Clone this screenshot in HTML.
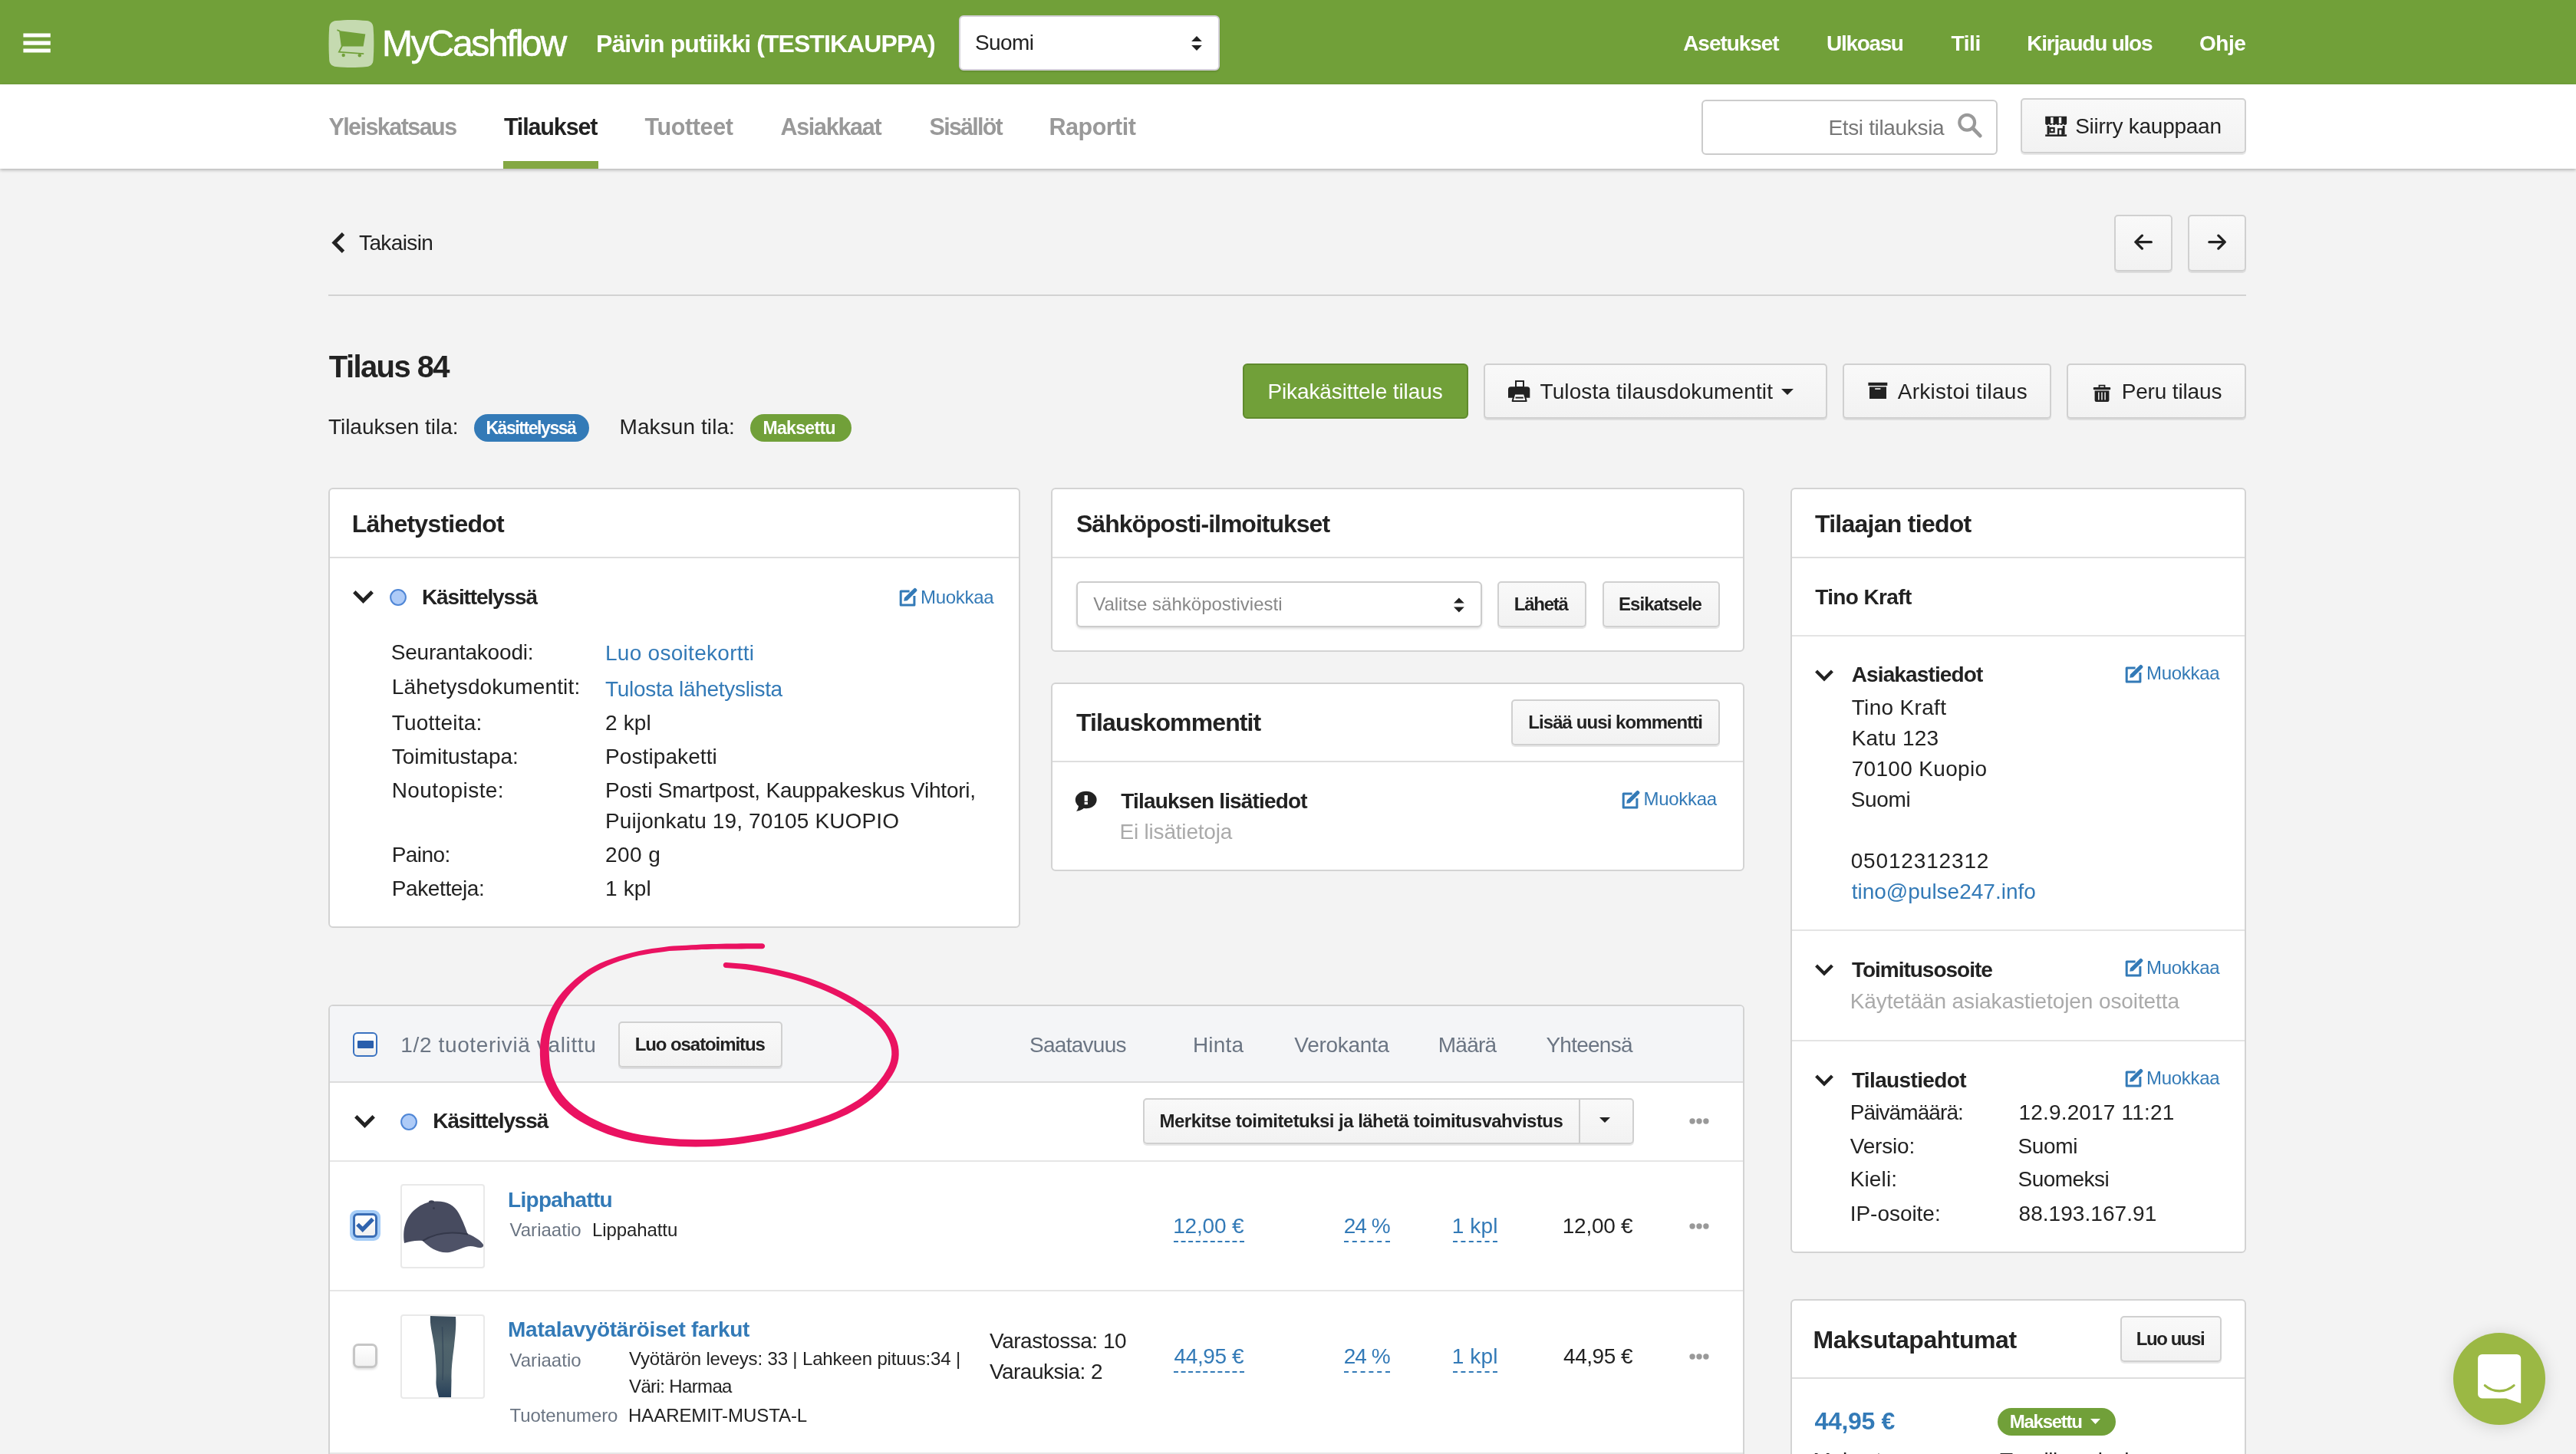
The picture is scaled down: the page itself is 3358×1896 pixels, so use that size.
<!DOCTYPE html>
<html lang="fi"><head><meta charset="utf-8"><title>Tilaus 84 - MyCashflow</title>
<style>
html{font-size:100px}@media (min-resolution:1.5dppx),(-webkit-min-device-pixel-ratio:1.5){html{font-size:calc(100vw/33.5799)}}html,body{margin:0;padding:0}
html{overflow:hidden;width:33.58rem;height:18.96rem}
body{width:33.58rem;height:18.96rem;overflow:hidden;background:#f3f3f3;font-family:"Liberation Sans",sans-serif;color:#222;position:relative}
.t{position:absolute;white-space:pre;line-height:1;font-size:0.28rem}
.b{position:absolute;box-sizing:border-box}
.card{position:absolute;box-sizing:border-box;background:#fff;border:0.02rem solid #d3d3d3;border-radius:0.06rem}
.btn{position:absolute;box-sizing:border-box;border:0.02rem solid #d0d0d0;border-radius:0.05rem;background:linear-gradient(#f9f9f9,#f2f2f2);box-shadow:0 0.02rem 0 rgba(0,0,0,.09)}
.hr{position:absolute;height:0.02rem;background:#dedede}
svg{position:absolute;overflow:visible}
</style></head><body>
<div id="pg" style="position:absolute;left:0;top:0;width:33.58rem;height:18.96rem;overflow:hidden">
<div class="b" style="left:0rem;top:0rem;width:33.58rem;height:1.1rem;background:#71a039"></div>
<svg style="left:0.28rem;top:0.4rem;width:0.42rem;height:0.32rem" viewBox="28 40 42 32"><path d="M30.400 43.400h35.400v5.100h-35.400zM30.400 53.600h35.400v5.100h-35.400zM30.400 63.500h35.400v5.100h-35.400z" fill="#fff"/></svg>
<svg style="left:4.26rem;top:0.24rem;width:0.64rem;height:0.66rem" viewBox="426 24 64 66"><path d="M438 27 C452 25.500 464 25.500 478 27 C483.500 27.600 486.200 31 486.600 36 C487.600 49 487.600 64 486.600 78 C486.200 83.500 483.500 86.400 478 87 C464 88.300 452 88.300 438 87 C432.500 86.400 429.600 83.500 429.200 78 C428.300 64 428.300 49 429.200 36 C429.600 31 432.500 27.600 438 27Z" fill="#c5dab0"/><path d="M439.600 38.300L443.400 39.700 443.400 40.300 476.300 44.600 473.600 60.600 446.800 60.600 443.300 67 474.200 69.300 474.200 71 440.500 68.600 444.800 60.200 442.200 41.300 439.200 40.100Z" fill="#71a039"/><circle cx="447.700" cy="72" r="2.200" fill="#71a039"/><circle cx="468.800" cy="72.300" r="2.200" fill="#71a039"/></svg>
<div class="b" style="left:12.5rem;top:0.2rem;width:3.4rem;height:0.72rem;background:#fff;border:0.02rem solid #d4d0d8;border-radius:0.06rem;box-shadow:0 0.02rem 0.02rem rgba(0,0,0,.10)"></div>
<svg style="left:15.5rem;top:0.44rem;width:0.2rem;height:0.25rem" viewBox="1550 44 20 25"><path d="M1553.100 54L1560 47 1566.800 54zM1553.100 59L1560 66 1566.800 59z" fill="#222"/></svg>
<div class="b" style="left:0rem;top:1.1rem;width:33.58rem;height:1.1rem;background:#fff;box-shadow:0 0.02rem 0.04rem rgba(0,0,0,.25)"></div>
<div class="b" style="left:6.56rem;top:2.1rem;width:1.237rem;height:0.1rem;background:#84a843"></div>
<div class="b" style="left:22.18rem;top:1.3rem;width:3.86rem;height:0.72rem;background:#fff;border:0.02rem solid #ccc;border-radius:0.06rem"></div>
<svg style="left:25.48rem;top:1.44rem;width:0.4rem;height:0.4rem" viewBox="2548 144 40 40"><circle cx="2564.200" cy="159.800" r="9.900" fill="none" stroke="#999" stroke-width="4.200"/><path d="M2571.500 167L2581.300 177.100" stroke="#999" stroke-width="4.800" stroke-linecap="round"/></svg>
<div class="btn" style="left:26.34rem;top:1.28rem;width:2.94rem;height:0.72rem"></div>
<svg style="left:26.64rem;top:1.5rem;width:0.32rem;height:0.3rem" viewBox="2664 150 32 30"><path d="M2666.200 151.700H2694.100V161.500Q2691.800 164.600 2689.450 161.500 2687.100 164.600 2684.800 161.500 2682.450 164.600 2680.150 161.500 2677.800 164.600 2675.500 161.500 2673.150 164.600 2670.850 161.500 2668.500 164.600 2666.200 161.500Z" fill="#222"/><path d="M2674.900 153v8M2685.500 153v8" stroke="#f6f6f6" stroke-width="3.400"/><path d="M2670 164v11.500M2690.200 164v11.500" stroke="#222" stroke-width="2.800"/><rect x="2666.200" y="175.400" width="27.900" height="2.500" fill="#222"/><rect x="2672.400" y="167" width="5.200" height="5.200" fill="none" stroke="#222" stroke-width="2.200"/><path d="M2683.200 176v-7.600h5.200v7.600" fill="none" stroke="#222" stroke-width="2.200"/></svg>
<svg style="left:4.32rem;top:3.03rem;width:0.19rem;height:0.27rem" viewBox="0 0 19 27"><path d="M15.500 1.8L3.800 13.500 15.500 25.200" fill="none" stroke="#222" stroke-width="4.800" stroke-linejoin="miter"/></svg>
<div class="btn" style="left:27.56rem;top:2.8rem;width:0.76rem;height:0.74rem"></div>
<div class="btn" style="left:28.52rem;top:2.8rem;width:0.76rem;height:0.74rem"></div>
<svg style="left:27.78rem;top:3.02rem;width:0.32rem;height:0.28rem" viewBox="2778 302 32 28"><path d="M2804.300 315.650H2784.200M2792.400 307.200L2783.900 315.650 2792.400 324.100" fill="none" stroke="#222" stroke-width="3.300" stroke-linecap="round" stroke-linejoin="round"/></svg>
<svg style="left:28.74rem;top:3.02rem;width:0.32rem;height:0.28rem" viewBox="2874 302 32 28"><path d="M2879.900 315.650H2900M2891.800 307.200L2900.300 315.650 2891.800 324.100" fill="none" stroke="#222" stroke-width="3.300" stroke-linecap="round" stroke-linejoin="round"/></svg>
<div class="hr" style="left:4.28rem;top:3.84rem;width:25rem;background:#d2d2d2"></div>
<div class="b" style="left:6.18rem;top:5.4rem;width:1.5rem;height:0.36rem;background:#337ab7;border-radius:0.18rem"></div>
<div class="b" style="left:9.78rem;top:5.4rem;width:1.32rem;height:0.36rem;background:#71a039;border-radius:0.18rem"></div>
<div class="b" style="left:16.2rem;top:4.74rem;width:2.94rem;height:0.72rem;background:#71a039;border:0.02rem solid #5f8a2d;border-radius:0.06rem"></div>
<div class="btn" style="left:19.34rem;top:4.74rem;width:4.48rem;height:0.72rem"></div>
<svg style="left:19.64rem;top:4.94rem;width:0.32rem;height:0.32rem" viewBox="1964 494 32 32"><rect x="1976" y="497" width="10" height="8" fill="#fafafa" stroke="#222" stroke-width="2"/><path d="M1969.500 504.200h21.300a3.500 3.500 0 0 1 3.500 3.500v11h-28.300v-11a3.500 3.500 0 0 1 3.500-3.500z" fill="#222"/><path d="M1974.300 513.600h12.700l2.700 9.400h-18.100z" fill="#fafafa" stroke="#222" stroke-width="2" stroke-linejoin="round"/><path d="M1975.500 518.600h10.300" stroke="#222" stroke-width="2"/></svg>
<svg style="left:23.22rem;top:5.07rem;width:0.16rem;height:0.08rem" viewBox="0 0 16 8"><path d="M0 0h16L8 8z" fill="#222"/></svg>
<div class="btn" style="left:24.02rem;top:4.74rem;width:2.72rem;height:0.72rem"></div>
<svg style="left:24.34rem;top:4.97rem;width:0.28rem;height:0.25rem" viewBox="2434 497 28 25"><rect x="2435.400" y="498.800" width="24.900" height="4.100" fill="#222"/><rect x="2437" y="504.400" width="22" height="15.600" fill="#222"/><rect x="2444.200" y="506.200" width="7.200" height="1.700" fill="#f0f0f0"/></svg>
<div class="btn" style="left:26.94rem;top:4.74rem;width:2.34rem;height:0.72rem"></div>
<svg style="left:27.27rem;top:5rem;width:0.26rem;height:0.26rem" viewBox="2727 500 26 26"><path d="M2736.500 505v-2.300h7v2.300" fill="none" stroke="#222" stroke-width="1.800"/><rect x="2728.800" y="505" width="22.400" height="3.300" rx="1" fill="#222"/><path d="M2730.600 509.500h18.800v12.400a2 2 0 0 1-2 2h-14.800a2 2 0 0 1-2-2z" fill="#222"/><path d="M2735.800 511.500v10M2739.950 511.500v10M2744.100 511.500v10" stroke="#f0f0f0" stroke-width="1.500"/></svg>
<div class="card" style="left:4.28rem;top:6.36rem;width:9.02rem;height:5.74rem;"></div>
<div class="hr" style="left:4.3rem;top:7.26rem;width:8.98rem;"></div>
<svg style="left:4.6rem;top:7.7rem;width:0.27rem;height:0.17rem" viewBox="0 0 27 17"><path d="M1.8 1.8L13.5 13.5 25.200 1.8" fill="none" stroke="#222" stroke-width="4.8" stroke-linejoin="miter"/></svg>
<svg style="left:5.07rem;top:7.67rem;width:0.24rem;height:0.24rem" viewBox="0 0 24 24"><circle cx="12" cy="12" r="9.9" fill="#aecbf7" stroke="#4f86d6" stroke-width="2"/></svg>
<svg style="left:11.72rem;top:7.65rem;width:0.24rem;height:0.26rem" viewBox="0 0 24 26"><path d="M13.600 6H2.200V23.900H19.900V12" fill="none" stroke="#337ab7" stroke-width="3" stroke-linejoin="round"/><path d="M6.200 18.800L6.900 14.400 19.300 2.500a2 2 0 0 1 2.800 0l0.800 0.800a2 2 0 0 1 0 2.800L10.600 18.200z" fill="#337ab7"/></svg>
<div class="card" style="left:13.7rem;top:6.36rem;width:9.04rem;height:2.14rem;"></div>
<div class="hr" style="left:13.72rem;top:7.26rem;width:9rem;"></div>
<div class="b" style="left:14.03rem;top:7.58rem;width:5.29rem;height:0.6rem;background:#fff;border:0.02rem solid #ccc;border-radius:0.06rem;box-shadow:0 0.02rem 0.03rem rgba(0,0,0,.12)"></div>
<svg style="left:18.92rem;top:7.76rem;width:0.2rem;height:0.26rem" viewBox="1892 776 20 26"><path d="M1895 786.400L1901.900 779.400 1908.800 786.400zM1895 791.400L1901.900 798.400 1908.800 791.400z" fill="#222"/></svg>
<div class="btn" style="left:19.52rem;top:7.58rem;width:1.16rem;height:0.6rem"></div>
<div class="btn" style="left:20.89rem;top:7.58rem;width:1.53rem;height:0.6rem"></div>
<div class="card" style="left:13.7rem;top:8.9rem;width:9.04rem;height:2.46rem;"></div>
<div class="btn" style="left:19.7rem;top:9.12rem;width:2.72rem;height:0.6rem"></div>
<div class="hr" style="left:13.72rem;top:9.92rem;width:9rem;"></div>
<svg style="left:14rem;top:10.3rem;width:0.32rem;height:0.3rem" viewBox="1400 1030 32 30"><ellipse cx="1415.700" cy="1043" rx="13.900" ry="11.200" fill="#222"/><path d="M1406 1049c0 4-1 6.500-3 8.800 4.500-.2 8-2 10.500-4.500z" fill="#222"/><rect x="1413.600" y="1037" width="4.300" height="7.700" fill="#fff"/><rect x="1413.600" y="1045.800" width="4.300" height="3.300" fill="#fff"/></svg>
<svg style="left:21.14rem;top:10.285rem;width:0.24rem;height:0.26rem" viewBox="0 0 24 26"><path d="M13.600 6H2.200V23.900H19.900V12" fill="none" stroke="#337ab7" stroke-width="3" stroke-linejoin="round"/><path d="M6.200 18.800L6.900 14.400 19.300 2.500a2 2 0 0 1 2.800 0l0.800 0.800a2 2 0 0 1 0 2.800L10.600 18.200z" fill="#337ab7"/></svg>
<div class="card" style="left:23.34rem;top:6.36rem;width:5.94rem;height:9.98rem;"></div>
<div class="hr" style="left:23.36rem;top:7.26rem;width:5.9rem;"></div>
<div class="hr" style="left:23.36rem;top:8.28rem;width:5.9rem;background:#e4e4e4"></div>
<svg style="left:23.66rem;top:8.73rem;width:0.24rem;height:0.16rem" viewBox="0 0 27 17"><path d="M1.8 1.8L13.5 13.5 25.200 1.8" fill="none" stroke="#222" stroke-width="4.8" stroke-linejoin="miter"/></svg>
<svg style="left:27.695rem;top:8.645rem;width:0.24rem;height:0.26rem" viewBox="0 0 24 26"><path d="M13.600 6H2.200V23.900H19.900V12" fill="none" stroke="#337ab7" stroke-width="3" stroke-linejoin="round"/><path d="M6.200 18.800L6.900 14.400 19.300 2.500a2 2 0 0 1 2.800 0l0.800 0.800a2 2 0 0 1 0 2.800L10.600 18.200z" fill="#337ab7"/></svg>
<div class="hr" style="left:23.36rem;top:12.12rem;width:5.9rem;background:#e4e4e4"></div>
<svg style="left:23.66rem;top:12.57rem;width:0.24rem;height:0.16rem" viewBox="0 0 27 17"><path d="M1.8 1.8L13.5 13.5 25.200 1.8" fill="none" stroke="#222" stroke-width="4.8" stroke-linejoin="miter"/></svg>
<svg style="left:27.695rem;top:12.48rem;width:0.24rem;height:0.26rem" viewBox="0 0 24 26"><path d="M13.600 6H2.200V23.900H19.900V12" fill="none" stroke="#337ab7" stroke-width="3" stroke-linejoin="round"/><path d="M6.200 18.800L6.900 14.400 19.300 2.500a2 2 0 0 1 2.800 0l0.800 0.800a2 2 0 0 1 0 2.800L10.600 18.200z" fill="#337ab7"/></svg>
<div class="hr" style="left:23.36rem;top:13.56rem;width:5.9rem;background:#e4e4e4"></div>
<svg style="left:23.66rem;top:14.01rem;width:0.24rem;height:0.16rem" viewBox="0 0 27 17"><path d="M1.8 1.8L13.5 13.5 25.200 1.8" fill="none" stroke="#222" stroke-width="4.8" stroke-linejoin="miter"/></svg>
<svg style="left:27.695rem;top:13.92rem;width:0.24rem;height:0.26rem" viewBox="0 0 24 26"><path d="M13.600 6H2.200V23.900H19.900V12" fill="none" stroke="#337ab7" stroke-width="3" stroke-linejoin="round"/><path d="M6.200 18.800L6.900 14.400 19.300 2.500a2 2 0 0 1 2.800 0l0.800 0.800a2 2 0 0 1 0 2.800L10.600 18.200z" fill="#337ab7"/></svg>
<div class="card" style="left:23.34rem;top:16.94rem;width:5.94rem;height:2.66rem;"></div>
<div class="btn" style="left:27.64rem;top:17.16rem;width:1.32rem;height:0.6rem"></div>
<div class="hr" style="left:23.36rem;top:17.96rem;width:5.9rem;"></div>
<div class="b" style="left:26.04rem;top:18.36rem;width:1.54rem;height:0.36rem;background:#71a039;border-radius:0.18rem"></div>
<svg style="left:27.25rem;top:18.5rem;width:0.13rem;height:0.07rem" viewBox="0 0 13 7"><path d="M0 0h13L6.5 7z" fill="#fff"/></svg>
<div class="card" style="left:4.28rem;top:13.1rem;width:18.46rem;height:6.5rem;overflow:hidden"></div>
<div class="b" style="left:4.3rem;top:13.12rem;width:18.42rem;height:0.98rem;background:#f4f5f7;border-radius:0.04rem 0.04rem 0 0"></div>
<div class="hr" style="left:4.3rem;top:14.1rem;width:18.42rem;background:#dcdcdc"></div>
<div class="b" style="left:4.6rem;top:13.46rem;width:0.32rem;height:0.32rem;background:linear-gradient(#fff,#f0f0f0);border:0.025rem solid #3a72c0;border-radius:0.06rem"></div>
<div class="b" style="left:4.66rem;top:13.57rem;width:0.205rem;height:0.095rem;background:#2b5fac;border-radius:0.01rem"></div>
<div class="btn" style="left:8.06rem;top:13.32rem;width:2.14rem;height:0.6rem"></div>
<svg style="left:4.62rem;top:14.54rem;width:0.27rem;height:0.17rem" viewBox="0 0 27 17"><path d="M1.8 1.8L13.5 13.5 25.200 1.8" fill="none" stroke="#222" stroke-width="4.8" stroke-linejoin="miter"/></svg>
<svg style="left:5.21rem;top:14.51rem;width:0.24rem;height:0.24rem" viewBox="0 0 24 24"><circle cx="12" cy="12" r="9.9" fill="#aecbf7" stroke="#4f86d6" stroke-width="2"/></svg>
<div class="btn" style="left:14.9rem;top:14.32rem;width:6.4rem;height:0.6rem"></div>
<div class="b" style="left:20.58rem;top:14.34rem;width:0.02rem;height:0.56rem;background:#cdcdcd"></div>
<svg style="left:20.85rem;top:14.57rem;width:0.14rem;height:0.07rem" viewBox="0 0 14 7"><path d="M0 0h14L7 7z" fill="#222"/></svg>
<svg style="left:22.008rem;top:14.58rem;width:0.28rem;height:0.08rem" viewBox="0 0 28 8"><circle cx="5.100" cy="4" r="3.700" fill="#999"/><circle cx="14" cy="4" r="3.700" fill="#999"/><circle cx="22.900" cy="4" r="3.700" fill="#999"/></svg>
<div class="hr" style="left:4.3rem;top:15.125rem;width:18.42rem;background:#e6e6e6"></div>
<div class="b" style="left:4.56rem;top:15.78rem;width:0.4rem;height:0.4rem;background:#a6cdf7;border-radius:0.09rem"></div>
<div class="b" style="left:4.6rem;top:15.82rem;width:0.32rem;height:0.32rem;background:linear-gradient(#fff,#f0f0f0);border:0.03rem solid #3a6db5;border-radius:0.06rem"></div>
<svg style="left:4.62rem;top:15.88rem;width:0.28rem;height:0.22rem" viewBox="462 1588 28 22"><path d="M466 1596.500l6.700 6.700 13.300-13.600" fill="none" stroke="#2e62ad" stroke-width="5.200"/></svg>
<div class="b" style="left:5.22rem;top:15.44rem;width:1.1rem;height:1.1rem;background:#fff;border:0.02rem solid #e9e9e9;border-radius:0.04rem"></div>
<svg style="left:5.24rem;top:15.6rem;width:1.08rem;height:0.8rem" viewBox="524 1560 108 80"><path d="M527 1621C524 1600 530 1583 548 1572 556 1568 560 1567 564 1567 580 1565 592 1571 598 1582 604 1593 607 1602 610 1610L551 1618C542 1617 534 1619 527 1621Z" fill="#474b5f"/><ellipse cx="562.500" cy="1567.300" rx="3.600" ry="2" fill="#3d4154"/><path d="M551 1618C570 1605 592 1606 610 1609 620 1613 628 1619 630 1623 631 1627 626 1628 620 1626 608 1622 600 1630 586 1633 572 1635 560 1627 551 1618Z" fill="#4e5267"/><path d="M551 1618C570 1606 592 1606 610 1609.500" fill="none" stroke="#34384a" stroke-width="2"/><circle cx="565.500" cy="1575.500" r="1.300" fill="#34384a"/></svg>
<svg style="left:22.008rem;top:15.95rem;width:0.28rem;height:0.08rem" viewBox="0 0 28 8"><circle cx="5.100" cy="4" r="3.700" fill="#999"/><circle cx="14" cy="4" r="3.700" fill="#999"/><circle cx="22.900" cy="4" r="3.700" fill="#999"/></svg>
<div class="hr" style="left:4.3rem;top:16.82rem;width:18.42rem;background:#e6e6e6"></div>
<div class="b" style="left:4.6rem;top:17.52rem;width:0.32rem;height:0.32rem;background:linear-gradient(#fff,#f1f1f1);border:0.03rem solid #c6c6c6;border-radius:0.07rem;box-shadow:0 0.02rem 0.03rem rgba(0,0,0,.12)"></div>
<div class="b" style="left:5.22rem;top:17.14rem;width:1.1rem;height:1.1rem;background:#fff;border:0.02rem solid #e9e9e9;border-radius:0.04rem"></div>
<svg style="left:5.24rem;top:17.15rem;width:1.08rem;height:1.08rem" viewBox="524 1715 108 108"><defs><linearGradient id="jg" x1="0" y1="0" x2="0" y2="1"><stop offset="0" stop-color="#3a4c5c"/><stop offset=".35" stop-color="#50646c"/><stop offset=".7" stop-color="#4a5f6a"/><stop offset="1" stop-color="#27405a"/></linearGradient></defs><path d="M561 1716L594 1717C595 1730 593 1745 592 1755 590 1770 588 1785 588.500 1800L588 1822 572 1822C570 1812 568 1808 568.500 1800 569 1785 568 1770 566 1755 564 1740 560 1728 561 1716Z" fill="url(#jg)"/><path d="M576.500 1730C577.500 1755 578 1775 577 1800" stroke="#33465a" stroke-width="1.500" fill="none" opacity=".8"/></svg>
<svg style="left:22.008rem;top:17.65rem;width:0.28rem;height:0.08rem" viewBox="0 0 28 8"><circle cx="5.100" cy="4" r="3.700" fill="#999"/><circle cx="14" cy="4" r="3.700" fill="#999"/><circle cx="22.900" cy="4" r="3.700" fill="#999"/></svg>
<div class="hr" style="left:4.3rem;top:18.94rem;width:18.42rem;background:#e6e6e6"></div>
<div class="b" style="left:15.3rem;top:16.18rem;width:0.92rem;height:0;border-top:0.02rem dashed #337ab7"></div>
<div class="b" style="left:17.52rem;top:16.18rem;width:0.6rem;height:0;border-top:0.02rem dashed #337ab7"></div>
<div class="b" style="left:18.94rem;top:16.18rem;width:0.58rem;height:0;border-top:0.02rem dashed #337ab7"></div>
<div class="b" style="left:15.3rem;top:17.88rem;width:0.92rem;height:0;border-top:0.02rem dashed #337ab7"></div>
<div class="b" style="left:17.52rem;top:17.88rem;width:0.6rem;height:0;border-top:0.02rem dashed #337ab7"></div>
<div class="b" style="left:18.94rem;top:17.88rem;width:0.58rem;height:0;border-top:0.02rem dashed #337ab7"></div>
<svg style="z-index:3;left:7rem;top:12.26rem;width:4.76rem;height:2.72rem" viewBox="700 1226 476 272"><path d="M993.7 1230.2L986.9 1230.2L980.1 1230.3L973.4 1230.3L966.6 1230.3L960.0 1230.4L953.4 1230.5L946.9 1230.6L940.5 1230.7L934.0 1230.9L927.5 1231.1L920.9 1231.3L914.3 1231.6L907.7 1231.9L901.2 1232.3L894.8 1232.7L889.0 1233.0L883.5 1233.3L877.9 1233.6L872.0 1234.1L865.3 1234.9L857.8 1235.9L849.6 1237.1L841.0 1238.5L832.2 1240.2L823.7 1242.2L815.1 1244.5L806.4 1247.0L797.8 1249.9L789.5 1253.0L781.7 1256.3L774.5 1260.0L767.8 1263.8L761.5 1268.0L755.4 1272.4L749.5 1277.2L743.8 1282.4L738.2 1287.9L732.9 1293.8L727.9 1300.0L723.4 1306.5L719.4 1313.4L715.8 1320.8L712.6 1328.2L709.9 1335.6L707.7 1342.7L706.0 1349.5L704.8 1356.1L704.2 1362.6L703.9 1368.9L703.9 1375.3L704.2 1381.7L704.7 1388.2L705.7 1394.8L707.3 1401.4L709.5 1408.1L712.3 1414.8L715.7 1421.5L719.6 1428.2L724.2 1434.7L729.5 1440.9L735.3 1446.6L741.6 1452.1L748.5 1457.2L756.0 1462.1L764.1 1466.6L772.9 1471.0L782.4 1475.1L792.3 1478.9L802.5 1482.3L812.8 1485.3L823.1 1487.7L833.6 1489.6L844.2 1491.2L854.8 1492.4L865.2 1493.5L875.7 1494.3L886.1 1494.9L896.5 1495.3L907.0 1495.4L917.4 1495.2L927.6 1494.9L937.7 1494.4L947.9 1493.6L958.5 1492.4L969.5 1491.0L981.3 1489.1L993.7 1486.9L1006.4 1484.3L1019.3 1481.5L1031.9 1478.3L1044.7 1474.8L1057.9 1470.8L1070.9 1466.6L1083.2 1462.2L1094.5 1457.6L1104.6 1452.9L1113.8 1448.0L1122.1 1443.0L1129.8 1437.7L1137.0 1432.3L1143.5 1426.5L1149.4 1420.4L1154.6 1414.2L1159.1 1408.1L1162.9 1402.3L1166.0 1396.7L1168.4 1391.4L1170.2 1386.0L1171.3 1380.7L1171.7 1375.3L1171.6 1369.8L1170.9 1364.3L1169.5 1358.8L1167.5 1353.4L1164.9 1348.1L1161.7 1342.9L1158.0 1337.7L1153.7 1332.5L1148.7 1327.4L1143.0 1322.3L1136.5 1317.1L1129.1 1311.9L1121.2 1306.7L1113.1 1301.8L1105.0 1297.2L1096.8 1293.0L1088.5 1289.0L1080.1 1285.2L1071.6 1281.8L1063.2 1278.5L1054.8 1275.6L1046.4 1272.9L1038.1 1270.5L1029.7 1268.3L1021.4 1266.2L1012.9 1264.2L1004.3 1262.4L995.8 1260.7L987.5 1259.3L979.7 1258.0L972.5 1257.1L965.7 1256.4L959.3 1256.0L952.9 1255.5L946.5 1255.0L944.7 1255.3L943.3 1256.5L942.7 1258.2L943.0 1260.0L944.2 1261.4L945.9 1262.0L952.4 1262.5L958.7 1263.0L965.1 1263.5L971.7 1264.2L978.7 1265.2L986.3 1266.4L994.5 1267.9L1002.8 1269.6L1011.3 1271.4L1019.6 1273.4L1027.8 1275.5L1036.0 1277.8L1044.2 1280.2L1052.3 1282.9L1060.4 1285.9L1068.6 1289.1L1076.9 1292.5L1085.1 1296.3L1093.2 1300.2L1101.0 1304.4L1108.8 1308.9L1116.7 1313.8L1124.3 1318.9L1131.3 1324.0L1137.4 1328.9L1142.5 1333.7L1147.0 1338.4L1150.8 1343.2L1154.0 1347.8L1156.7 1352.5L1158.9 1357.1L1160.5 1361.6L1161.6 1366.1L1162.2 1370.5L1162.3 1374.9L1161.8 1379.3L1161.0 1383.6L1159.5 1387.9L1157.5 1392.4L1154.7 1397.3L1151.3 1402.7L1147.1 1408.3L1142.4 1414.1L1137.0 1419.7L1131.0 1425.1L1124.4 1430.2L1117.2 1435.3L1109.2 1440.1L1100.5 1444.8L1090.9 1449.4L1080.0 1453.9L1068.0 1458.3L1055.2 1462.5L1042.3 1466.4L1029.7 1469.9L1017.3 1473.0L1004.6 1475.8L992.1 1478.2L979.9 1480.3L968.3 1482.0L957.4 1483.5L947.1 1484.5L937.2 1485.2L927.3 1485.7L917.2 1486.0L907.0 1486.0L896.8 1485.8L886.6 1485.4L876.4 1484.7L866.2 1483.7L855.9 1482.6L845.5 1481.3L835.3 1479.7L825.2 1477.7L815.4 1475.3L805.7 1472.4L796.0 1469.0L786.5 1465.2L777.5 1461.1L769.3 1457.0L761.9 1452.6L755.0 1448.0L748.7 1443.3L743.0 1438.3L737.9 1433.1L733.5 1427.7L729.5 1421.9L726.1 1415.9L723.2 1409.8L720.7 1403.9L718.9 1398.2L717.6 1392.5L716.7 1386.8L716.2 1380.9L715.9 1374.9L715.7 1369.0L715.8 1363.3L716.2 1357.5L717.0 1351.6L718.3 1345.5L720.1 1338.9L722.4 1331.9L725.1 1324.8L728.1 1317.9L731.6 1311.5L735.4 1305.4L739.8 1299.4L744.5 1293.7L749.6 1288.3L754.9 1283.2L760.3 1278.5L765.9 1274.1L771.7 1270.1L778.0 1266.3L784.7 1262.7L792.1 1259.2L800.1 1256.0L808.4 1253.0L816.8 1250.4L825.1 1248.0L833.5 1246.0L842.0 1244.4L850.5 1243.0L858.6 1241.9L866.1 1240.9L872.6 1240.1L878.3 1239.7L883.8 1239.4L889.3 1239.2L895.2 1238.9L901.5 1238.6L908.0 1238.4L914.5 1238.1L921.2 1237.9L927.7 1237.7L934.1 1237.6L940.6 1237.5L947.0 1237.5L953.5 1237.4L960.0 1237.4L966.7 1237.4L973.4 1237.3L980.2 1237.3L987.0 1237.2L993.7 1237.2L995.5 1236.7L996.7 1235.4L997.2 1233.7L996.7 1231.9L995.4 1230.7Z" fill="#ea1261"/></svg>
<div class="b" style="left:31.98rem;top:17.38rem;width:1.2rem;height:1.2rem;background:#9bb844;border-radius:0.6rem;box-shadow:0 0.02rem 0.22rem rgba(0,0,0,.14)"></div>
<svg style="left:32.28rem;top:17.64rem;width:0.62rem;height:0.68rem" viewBox="3228 1764 62 68"><path d="M3235.600 1766h45.100a5.500 5.500 0 0 1 5.500 5.500v58.500l-19.200-6.600h-31.400a5.500 5.500 0 0 1-5.500-5.500v-46.400a5.500 5.500 0 0 1 5.500-5.500z" fill="#fff"/><path d="M3239.300 1806.600c10.500 9.600 27.200 9.600 37.800 0" fill="none" stroke="#9bb844" stroke-width="3.200" stroke-linecap="round"/></svg>
<div id="tx" style="position:absolute;left:0;top:0;width:33.58rem;height:18.96rem;will-change:transform">
<div class="t" style="left:4.98rem;top:0.33rem;font-size:0.48rem;color:#fff;letter-spacing:-0.0225rem;-webkit-text-stroke:0.006rem #fff;">MyCashflow</div>
<div class="t" style="left:7.77rem;top:0.41rem;font-size:0.32rem;font-weight:700;color:#fff;letter-spacing:-0.0093rem;">Päivin putiikki (TESTIKAUPPA)</div>
<div class="t" style="left:12.709rem;top:0.42rem;letter-spacing:-0.0059rem;">Suomi</div>
<div class="t" style="left:21.942rem;top:0.43rem;font-weight:700;color:#fff;letter-spacing:-0.0105rem;">Asetukset</div>
<div class="t" style="left:23.811rem;top:0.43rem;font-weight:700;color:#fff;letter-spacing:-0.0134rem;">Ulkoasu</div>
<div class="t" style="left:25.435rem;top:0.43rem;font-weight:700;color:#fff;letter-spacing:-0.0042rem;">Tili</div>
<div class="t" style="left:26.422rem;top:0.43rem;font-weight:700;color:#fff;letter-spacing:-0.0121rem;">Kirjaudu ulos</div>
<div class="t" style="left:28.67rem;top:0.43rem;font-weight:700;color:#fff;letter-spacing:-0.0045rem;">Ohje</div>
<div class="t" style="left:4.284rem;top:1.5rem;font-size:0.305rem;font-weight:700;color:#999;letter-spacing:-0.0155rem;">Yleiskatsaus</div>
<div class="t" style="left:6.569rem;top:1.5rem;font-size:0.305rem;font-weight:700;letter-spacing:-0.0114rem;">Tilaukset</div>
<div class="t" style="left:8.405rem;top:1.5rem;font-size:0.305rem;font-weight:700;color:#999;letter-spacing:-0.0037rem;">Tuotteet</div>
<div class="t" style="left:10.174rem;top:1.5rem;font-size:0.305rem;font-weight:700;color:#999;letter-spacing:-0.0127rem;">Asiakkaat</div>
<div class="t" style="left:12.116rem;top:1.5rem;font-size:0.305rem;font-weight:700;color:#999;letter-spacing:-0.0176rem;">Sisällöt</div>
<div class="t" style="left:13.676rem;top:1.5rem;font-size:0.305rem;font-weight:700;color:#999;letter-spacing:-0.0052rem;">Raportit</div>
<div class="t" style="left:23.834rem;top:1.53rem;color:#777;letter-spacing:-0.0034rem;">Etsi tilauksia</div>
<div class="t" style="left:27.052rem;top:1.51rem;letter-spacing:-0.0027rem;">Siirry kauppaan</div>
<div class="t" style="left:4.68rem;top:3.03rem;letter-spacing:-0.0061rem;">Takaisin</div>
<div class="t" style="left:4.288rem;top:4.58rem;font-size:0.4rem;font-weight:700;letter-spacing:-0.0159rem;">Tilaus 84</div>
<div class="t" style="left:4.28rem;top:5.43rem;letter-spacing:-0.0005rem;">Tilauksen tila:</div>
<div class="t" style="left:6.334rem;top:5.47rem;font-size:0.23rem;font-weight:700;color:#fff;letter-spacing:-0.0143rem;">Käsittelyssä</div>
<div class="t" style="left:8.075rem;top:5.43rem;letter-spacing:0.0009rem;">Maksun tila:</div>
<div class="t" style="left:9.945rem;top:5.47rem;font-size:0.23rem;font-weight:700;color:#fff;letter-spacing:-0.0068rem;">Maksettu</div>
<div class="t" style="left:16.524rem;top:4.97rem;color:#fff;letter-spacing:-0.0011rem;">Pikakäsittele tilaus</div>
<div class="t" style="left:20.075rem;top:4.97rem;letter-spacing:0.0011rem;">Tulosta tilausdokumentit</div>
<div class="t" style="left:24.737rem;top:4.97rem;letter-spacing:0.0029rem;">Arkistoi tilaus</div>
<div class="t" style="left:27.657rem;top:4.97rem;letter-spacing:-0.0016rem;">Peru tilaus</div>
<div class="t" style="left:4.588rem;top:6.67rem;font-size:0.32rem;font-weight:700;letter-spacing:-0.0076rem;">Lähetystiedot</div>
<div class="t" style="left:5.5rem;top:7.65rem;font-weight:700;letter-spacing:-0.0113rem;">Käsittelyssä</div>
<div class="t" style="left:12rem;top:7.67rem;font-size:0.24rem;color:#337ab7;letter-spacing:-0.0031rem;">Muokkaa</div>
<div class="t" style="left:5.097rem;top:8.37rem;letter-spacing:-0.0019rem;">Seurantakoodi:</div>
<div class="t" style="left:7.89rem;top:8.38rem;color:#337ab7;letter-spacing:0.0028rem;">Luo osoitekortti</div>
<div class="t" style="left:5.107rem;top:8.82rem;letter-spacing:0.0016rem;">Lähetysdokumentit:</div>
<div class="t" style="left:7.89rem;top:8.85rem;color:#337ab7;letter-spacing:-0.0031rem;">Tulosta lähetyslista</div>
<div class="t" style="left:5.107rem;top:9.29rem;letter-spacing:0.0021rem;">Tuotteita:</div>
<div class="t" style="left:7.89rem;top:9.29rem;letter-spacing:0.0016rem;">2 kpl</div>
<div class="t" style="left:5.107rem;top:9.73rem;letter-spacing:0.0002rem;">Toimitustapa:</div>
<div class="t" style="left:7.89rem;top:9.73rem;letter-spacing:0.001rem;">Postipaketti</div>
<div class="t" style="left:5.107rem;top:10.17rem;letter-spacing:0.0043rem;">Noutopiste:</div>
<div class="t" style="left:7.89rem;top:10.17rem;letter-spacing:-0.0022rem;">Posti Smartpost, Kauppakeskus Vihtori,</div>
<div class="t" style="left:7.89rem;top:10.57rem;letter-spacing:0.0012rem;">Puijonkatu 19, 70105 KUOPIO</div>
<div class="t" style="left:5.107rem;top:11.01rem;letter-spacing:-0.0056rem;">Paino:</div>
<div class="t" style="left:7.89rem;top:11.01rem;letter-spacing:0.0042rem;">200 g</div>
<div class="t" style="left:5.107rem;top:11.45rem;letter-spacing:-0.0038rem;">Paketteja:</div>
<div class="t" style="left:7.89rem;top:11.45rem;letter-spacing:0.0016rem;">1 kpl</div>
<div class="t" style="left:14.03rem;top:6.67rem;font-size:0.32rem;font-weight:700;letter-spacing:-0.01rem;">Sähköposti-ilmoitukset</div>
<div class="t" style="left:14.252rem;top:7.76rem;font-size:0.24rem;color:#888;">Valitse sähköpostiviesti</div>
<div class="t" style="left:19.738rem;top:7.76rem;font-size:0.24rem;font-weight:700;letter-spacing:-0.0124rem;">Lähetä</div>
<div class="t" style="left:21.1rem;top:7.76rem;font-size:0.24rem;font-weight:700;letter-spacing:-0.0095rem;">Esikatsele</div>
<div class="t" style="left:14.03rem;top:9.26rem;font-size:0.32rem;font-weight:700;letter-spacing:-0.0089rem;">Tilauskommentit</div>
<div class="t" style="left:19.923rem;top:9.3rem;font-size:0.24rem;font-weight:700;letter-spacing:-0.0093rem;">Lisää uusi kommentti</div>
<div class="t" style="left:14.613rem;top:10.31rem;font-weight:700;letter-spacing:-0.0085rem;">Tilauksen lisätiedot</div>
<div class="t" style="left:14.595rem;top:10.71rem;color:#aaa;letter-spacing:-0.002rem;">Ei lisätietoja</div>
<div class="t" style="left:21.425rem;top:10.3rem;font-size:0.24rem;color:#337ab7;letter-spacing:-0.0031rem;">Muokkaa</div>
<div class="t" style="left:23.659rem;top:6.67rem;font-size:0.32rem;font-weight:700;letter-spacing:-0.0073rem;">Tilaajan tiedot</div>
<div class="t" style="left:23.662rem;top:7.65rem;font-weight:700;letter-spacing:-0.0062rem;">Tino Kraft</div>
<div class="t" style="left:24.137rem;top:8.66rem;font-weight:700;letter-spacing:-0.0087rem;">Asiakastiedot</div>
<div class="t" style="left:27.98rem;top:8.66rem;font-size:0.24rem;color:#337ab7;letter-spacing:-0.0031rem;">Muokkaa</div>
<div class="t" style="left:24.137rem;top:9.09rem;letter-spacing:0.0033rem;">Tino Kraft</div>
<div class="t" style="left:24.137rem;top:9.49rem;letter-spacing:0.002rem;">Katu 123</div>
<div class="t" style="left:24.137rem;top:9.89rem;letter-spacing:0.0032rem;">70100 Kuopio</div>
<div class="t" style="left:24.127rem;top:10.29rem;letter-spacing:-0.0035rem;">Suomi</div>
<div class="t" style="left:24.127rem;top:11.09rem;letter-spacing:0.0084rem;">05012312312</div>
<div class="t" style="left:24.137rem;top:11.49rem;color:#337ab7;">tino@pulse247.info</div>
<div class="t" style="left:24.139rem;top:12.51rem;font-weight:700;letter-spacing:-0.0101rem;">Toimitusosoite</div>
<div class="t" style="left:27.98rem;top:12.5rem;font-size:0.24rem;color:#337ab7;letter-spacing:-0.0031rem;">Muokkaa</div>
<div class="t" style="left:24.117rem;top:12.92rem;color:#aaa;letter-spacing:-0.001rem;">Käytetään asiakastietojen osoitetta</div>
<div class="t" style="left:24.139rem;top:13.95rem;font-weight:700;letter-spacing:-0.0063rem;">Tilaustiedot</div>
<div class="t" style="left:27.98rem;top:13.94rem;font-size:0.24rem;color:#337ab7;letter-spacing:-0.0031rem;">Muokkaa</div>
<div class="t" style="left:24.117rem;top:14.37rem;letter-spacing:-0.009rem;">Päivämäärä:</div>
<div class="t" style="left:26.315rem;top:14.37rem;letter-spacing:0.0017rem;">12.9.2017 11:21</div>
<div class="t" style="left:24.117rem;top:14.81rem;letter-spacing:-0.0017rem;">Versio:</div>
<div class="t" style="left:26.305rem;top:14.81rem;letter-spacing:-0.0035rem;">Suomi</div>
<div class="t" style="left:24.117rem;top:15.24rem;letter-spacing:0.0014rem;">Kieli:</div>
<div class="t" style="left:26.305rem;top:15.24rem;letter-spacing:-0.0053rem;">Suomeksi</div>
<div class="t" style="left:24.117rem;top:15.69rem;letter-spacing:-0.0003rem;">IP-osoite:</div>
<div class="t" style="left:26.315rem;top:15.69rem;letter-spacing:0.0006rem;">88.193.167.91</div>
<div class="t" style="left:23.635rem;top:17.31rem;font-size:0.32rem;font-weight:700;letter-spacing:-0.0046rem;">Maksutapahtumat</div>
<div class="t" style="left:27.848rem;top:17.34rem;font-size:0.24rem;font-weight:700;letter-spacing:-0.0145rem;">Luo uusi</div>
<div class="t" style="left:23.655rem;top:18.37rem;font-size:0.32rem;font-weight:700;color:#337ab7;letter-spacing:-0.0034rem;">44,95 €</div>
<div class="t" style="left:26.198rem;top:18.42rem;font-size:0.24rem;font-weight:700;color:#fff;letter-spacing:-0.0127rem;">Maksettu</div>
<div class="t" style="left:23.635rem;top:18.91rem;letter-spacing:-0.0015rem;">Maksutapa:</div>
<div class="t" style="left:26.07rem;top:18.91rem;letter-spacing:-0.0042rem;">Tavallinen lasku</div>
<div class="t" style="left:5.223rem;top:13.49rem;color:#6b7583;letter-spacing:0.0063rem;">1/2 tuoteriviä valittu</div>
<div class="t" style="left:8.277rem;top:13.5rem;font-size:0.24rem;font-weight:700;letter-spacing:-0.0108rem;">Luo osatoimitus</div>
<div class="t" style="left:13.42rem;top:13.49rem;color:#6b7583;letter-spacing:-0.0073rem;">Saatavuus</div>
<div class="t" style="left:15.549rem;top:13.49rem;color:#6b7583;letter-spacing:0.002rem;">Hinta</div>
<div class="t" style="left:16.873rem;top:13.49rem;color:#6b7583;letter-spacing:-0.0029rem;">Verokanta</div>
<div class="t" style="left:18.748rem;top:13.49rem;color:#6b7583;letter-spacing:-0.0078rem;">Määrä</div>
<div class="t" style="left:20.154rem;top:13.49rem;color:#6b7583;letter-spacing:-0.0074rem;">Yhteensä</div>
<div class="t" style="left:5.643rem;top:14.48rem;font-weight:700;letter-spacing:-0.0113rem;">Käsittelyssä</div>
<div class="t" style="left:15.116rem;top:14.5rem;font-size:0.24rem;font-weight:700;letter-spacing:-0.0054rem;">Merkitse toimitetuksi ja lähetä toimitusvahvistus</div>
<div class="t" style="left:6.621rem;top:15.51rem;font-weight:700;color:#337ab7;letter-spacing:-0.0072rem;">Lippahattu</div>
<div class="t" style="left:6.645rem;top:15.92rem;font-size:0.24rem;color:#6b7583;letter-spacing:0.0002rem;">Variaatio</div>
<div class="t" style="left:7.72rem;top:15.92rem;font-size:0.24rem;letter-spacing:-0.0009rem;">Lippahattu</div>
<div class="t" style="left:15.292rem;top:15.85rem;color:#337ab7;letter-spacing:-0.0019rem;">12,00 €</div>
<div class="t" style="left:17.517rem;top:15.85rem;color:#337ab7;letter-spacing:-0.0097rem;">24 %</div>
<div class="t" style="left:18.927rem;top:15.85rem;color:#337ab7;letter-spacing:0.0014rem;">1 kpl</div>
<div class="t" style="left:20.368rem;top:15.85rem;letter-spacing:-0.0026rem;">12,00 €</div>
<div class="t" style="left:6.621rem;top:17.2rem;font-weight:700;color:#337ab7;letter-spacing:-0.003rem;">Matalavyötäröiset farkut</div>
<div class="t" style="left:6.645rem;top:17.62rem;font-size:0.24rem;color:#6b7583;letter-spacing:0.0002rem;">Variaatio</div>
<div class="t" style="left:8.2rem;top:17.6rem;font-size:0.24rem;letter-spacing:-0.0016rem;">Vyötärön leveys: 33 | Lahkeen pituus:34 |</div>
<div class="t" style="left:8.2rem;top:17.96rem;font-size:0.24rem;letter-spacing:-0.0063rem;">Väri: Harmaa</div>
<div class="t" style="left:6.645rem;top:18.34rem;font-size:0.24rem;color:#6b7583;letter-spacing:-0.0009rem;">Tuotenumero</div>
<div class="t" style="left:8.19rem;top:18.34rem;font-size:0.24rem;letter-spacing:-0.0007rem;">HAAREMIT-MUSTA-L</div>
<div class="t" style="left:12.9rem;top:17.35rem;letter-spacing:-0.0047rem;">Varastossa: 10</div>
<div class="t" style="left:12.9rem;top:17.75rem;letter-spacing:-0.0054rem;">Varauksia: 2</div>
<div class="t" style="left:15.306rem;top:17.55rem;color:#337ab7;letter-spacing:-0.0042rem;">44,95 €</div>
<div class="t" style="left:17.517rem;top:17.55rem;color:#337ab7;letter-spacing:-0.0097rem;">24 %</div>
<div class="t" style="left:18.927rem;top:17.55rem;color:#337ab7;letter-spacing:0.0014rem;">1 kpl</div>
<div class="t" style="left:20.381rem;top:17.55rem;letter-spacing:-0.0047rem;">44,95 €</div>
</div>
</div>
</body></html>
